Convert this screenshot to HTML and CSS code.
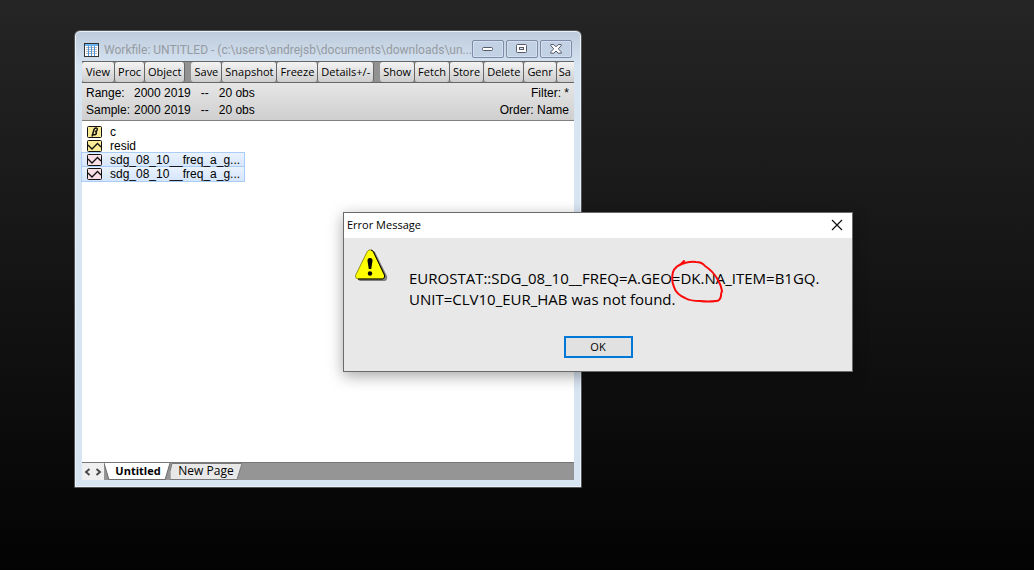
FILE: index.html
```html
<!DOCTYPE html>
<html lang="en">
<head>
<meta charset="utf-8">
<title>Workfile: UNTITLED</title>
<link rel="stylesheet" href="styles.css">
</head>
<body>
<main class="desktop">
  <section class="workfile">
    <header class="titlebar">
      <svg class="app-icon" width="15" height="14" viewBox="0 0 15 14" shape-rendering="crispEdges">
        <rect x=".5" y=".5" width="14" height="13" fill="#fff" stroke="#333"/>
        <path d="M1 1h13v2H1z" fill="#6bb3ee"/>
        <path d="M2 4.500h11M2 6.500h11M2 8.500h11M2 10.500h11" stroke="#b9b9b9"/>
        <path d="M4.500 3v10M7.500 3v10M10.500 3v10" stroke="#4b95e0"/>
      </svg>
      <h1 class="title">Workfile: UNTITLED - (c:\users\andrejsb\documents\downloads\un...</h1>
      <div class="controls">
        <button class="control" aria-label="Minimize"><svg width="12" height="6" viewBox="0 0 12 6"><rect x=".5" y="1.500" width="10" height="3" rx="1" fill="#fff" stroke="#555968"/></svg></button>
        <button class="control" aria-label="Maximize"><svg width="12" height="10" viewBox="0 0 12 10"><rect x=".5" y=".5" width="10" height="8" rx="1" fill="#fff" stroke="#555968"/><rect x="3.500" y="3.500" width="4" height="2" fill="#dce7f3" stroke="#555968"/></svg></button>
        <button class="control" aria-label="Close"><svg width="12" height="10" viewBox="0 0 12 10"><path d="M.7.6h3.200L6 2.800 8.100.6h3.200v1L8.200 4.800l3.100 3.100v1.300H8.100L6 7 3.900 9.200H.7V7.900l3.100-3.100L.7 1.600z" fill="#fff" stroke="#555968"/></svg></button>
      </div>
    </header>
    <div class="client">
      <nav class="toolbar">
        <button class="tool">View</button><button class="tool">Proc</button><button class="tool">Object</button><span class="divider"></span><button class="tool">Save</button><button class="tool">Snapshot</button><button class="tool">Freeze</button><button class="tool">Details+/-</button><span class="divider"></span><button class="tool">Show</button><button class="tool">Fetch</button><button class="tool">Store</button><button class="tool">Delete</button><button class="tool">Genr</button><button class="tool last">Sa</button>
      </nav>
      <div class="info">
        <span>Range:</span><span>2000 2019 &nbsp; -- &nbsp; 20 obs</span><span class="end">Filter: *</span>
        <span>Sample:</span><span>2000 2019 &nbsp; -- &nbsp; 20 obs</span><span class="end">Order: Name</span>
      </div>
      <ul class="objects">
        <li class="object"><svg class="object-icon" viewBox="0 0 15 12"><rect x=".5" y=".5" width="14" height="11" rx="1" fill="#faeb96" stroke="#111"/><path d="M5 10.500 7 3.500Q7.600 2 9 2t1.300 1.500Q10.200 5.300 8 5.600 9.800 5.800 9.300 7.600 8.600 9.200 6.200 8.700" fill="none" stroke="#111" stroke-width="1.500"/></svg><span>c</span></li>
        <li class="object"><svg class="object-icon" viewBox="0 0 15 12"><rect x=".5" y=".5" width="14" height="11" rx="1" fill="#faeb96" stroke="#111"/><path d="M1 5l4 4L10.500 3.500 14 7" fill="none" stroke="#111" stroke-width="1.300"/></svg><span>resid</span></li>
        <li class="object selected"><svg class="object-icon" viewBox="0 0 15 12"><rect x=".5" y=".5" width="14" height="11" rx="1" fill="#fbdfe6" stroke="#111"/><path d="M1 5l4 4L10.500 3.500 14 7" fill="none" stroke="#111" stroke-width="1.300"/></svg><span>sdg_08_10__freq_a_g...</span></li>
        <li class="object selected"><svg class="object-icon" viewBox="0 0 15 12"><rect x=".5" y=".5" width="14" height="11" rx="1" fill="#fbdfe6" stroke="#111"/><path d="M1 5l4 4L10.500 3.500 14 7" fill="none" stroke="#111" stroke-width="1.300"/></svg><span>sdg_08_10__freq_a_g...</span></li>
      </ul>
      <footer class="pages">
        <div class="arrows">
          <button class="arrow" aria-label="Previous page"><svg width="7" height="8" viewBox="0 0 7 8"><path d="M5.500 1 2 4l3.500 3" fill="none" stroke="#444" stroke-width="1.800"/></svg></button>
          <button class="arrow" aria-label="Next page"><svg width="7" height="8" viewBox="0 0 7 8"><path d="M1.500 1 5 4 1.500 7" fill="none" stroke="#444" stroke-width="1.800"/></svg></button>
        </div>
        <button class="page current"><svg class="page-shape" viewBox="0 0 68 18" preserveAspectRatio="none"><path d="M0 0h68l-5 17.500H5z" fill="#fff"/><path d="M0 0l5 17.500h58L68 0" fill="none" stroke="#666"/></svg><span>Untitled</span></button>
        <button class="page"><svg class="page-shape" viewBox="0 0 72 18" preserveAspectRatio="none"><path d="M2 .5h70l-5 17H0V9z" fill="#e8e8e8" stroke="#777"/></svg><span>New Page</span></button>
      </footer>
    </div>
  </section>

  <section class="dialog" role="dialog" aria-labelledby="dialog-title">
    <header class="dialog-bar">
      <h2 class="dialog-title" id="dialog-title">Error Message</h2>
      <button class="dialog-close" aria-label="Close"><svg width="12" height="12" viewBox="0 0 12 12"><path d="M1 1l10 10M11 1 1 11" stroke="#111" stroke-width="1.200"/></svg></button>
    </header>
    <div class="dialog-body">
      <svg class="warning" width="33" height="33" viewBox="0 0 33 33">
        <path d="M16 3q2-2 4 0l12 24q1 4-2 5H5q-3-1-2-4z" fill="#808080"/>
        <path d="M14.500 1q2.500-.8 4 2l11 23q1 3-2 4H3q-3-.5-2.500-3.500L12 3q1-1.800 2.500-2z" fill="#ff0" stroke="#77770a" stroke-width=".8"/>
        <path d="M16 1q2 .5 2.500 2l11 23q1 3-2 4H3" fill="none" stroke="#000"/>
        <path d="M15 9q2.700 0 2.500 3l-1.300 8h-2.400l-1.300-8q-.2-3 2.500-3z"/><circle cx="15" cy="24.500" r="2.200"/>
      </svg>
      <p class="message">EUROSTAT::SDG_08_10__FREQ=A.GEO=<span class="marked">DK.NA<svg class="mark" width="54" height="48" viewBox="0 0 54 48"><path d="M10 6 14 2M8 7q9-5 18-4 6 0 9 4 8 5 13 14 3 5 4 11-1 2-1 5-1 5-5 5-8 1-16 0-10 0-15-3-9-4-11-11-3-7-1-15Q5 7 14 4" fill="none" stroke="#fc0a0a" stroke-width="2" stroke-linecap="round" stroke-linejoin="round"/></svg></span>_ITEM=B1GQ.<br>UNIT=CLV10_EUR_HAB was not found.</p>
      <button class="ok">OK</button>
    </div>
  </section>
</main>
</body>
</html>
```
FILE: styles.css
```css
* { box-sizing: border-box; }

body {
  margin: 0;
  font: 12px/16px "Open Sans", "Noto Sans", sans-serif;
  color: #000;
}

button {
  margin: 0;
  padding: 0;
  border: 0;
  background: none;
  font: inherit;
  color: inherit;
}

.desktop {
  position: relative;
  min-height: 100vh;
  overflow: hidden;
  background: linear-gradient(#252525, #030303);
}

.workfile {
  position: absolute;
  left: 74px;
  top: 30px;
  width: 508px;
  padding: 7px;
  border: 1px solid #555;
  border-radius: 6px 6px 0 0;
  background: linear-gradient(#bdcbdc, #d7e4f2 36px);
  box-shadow: inset 0 0 0 1px #e9f1f9;
}

.titlebar {
  display: flex;
  align-items: center;
  gap: 5px;
  height: 23px;
  padding: 0 2px 0;
}

.title {
  flex: 1;
  min-width: 0;
  margin: 0;
  font: 12px/16px Roboto, "Open Sans", sans-serif;
  white-space: nowrap;
  color: #969ba2;
}

.controls { display: flex; gap: 2px; padding-bottom: 1px; }

.control {
  display: flex;
  align-items: center;
  justify-content: center;
  width: 32px;
  height: 18px;
  border: 1px solid #7f8ba8;
  border-radius: 2px;
  background: #c2d1e3;
  box-shadow: inset 0 0 0 1px #d3dfed;
}

.client { background: #fff; }

.toolbar {
  display: flex;
  height: 22px;
  overflow: hidden;
  border-top: 1px solid #666;
  border-bottom: 1px solid #666;
  background: #929292;
}

.tool {
  flex: none;
  padding: 0 3px;
  border: 1px solid #666;
  border-width: 0 1px 0 0;
  border-radius: 3px;
  background: linear-gradient(#f4f4f4, #cdcdcd);
  font-size: 11px;
}

.tool:first-child { padding: 0 4px; }

.last {
  flex: 1;
  padding: 0 0 0 2px;
  border-right: 0;
  border-radius: 3px 0 0 3px;
  text-align: left;
}

.divider { flex: none; width: 6px; }

.info {
  display: grid;
  grid-template-columns: 48px 1fr auto;
  padding: 2px 5px 1px 4px;
  border-bottom: 1px solid #808080;
  background: linear-gradient(#e6e6e6, #cfcfcf);
  font: 12px/17px "Liberation Sans", Arial, sans-serif;
}

.end { text-align: right; }

.objects {
  display: flex;
  flex-direction: column;
  align-items: flex-start;
  min-height: 341px;
  margin: 0;
  padding: 4px 0;
  list-style: none;
  font: 12px/14px "Liberation Sans", Arial, sans-serif;
}

.object {
  display: flex;
  align-items: center;
  gap: 8px;
  height: 14px;
  padding: 0 4px 0 5px;
}

.object span { position: relative; z-index: 1; }

.object-icon { width: 15px; height: 12px; }

.selected {
  background: linear-gradient(#eaf2fd, #d5e5fb);
  box-shadow: 0 0 0 1px #aaccf8;
}

.pages {
  display: flex;
  height: 18px;
  border-top: 1px solid #777;
  background: #959595;
}

.arrows {
  display: flex;
  align-items: center;
  gap: 4px;
  width: 22px;
  padding-left: 2px;
  background: #efefef;
}

.arrow { display: flex; }

.page {
  position: relative;
  width: 72px;
  padding-bottom: 2px;
  font-size: 12px;
  line-height: 15px;
}

.page span { position: relative; }

.page-shape {
  position: absolute;
  inset: 0;
  width: 100%;
  height: 100%;
}

.current {
  z-index: 1;
  width: 66px;
  padding-left: 2px;
  font-size: 11px;
  font-weight: 700;
}

.dialog {
  position: absolute;
  left: 343px;
  top: 212px;
  width: 510px;
  border: 1px solid #6a6a6a;
  background: #e8e8e8;
  box-shadow: 0 4px 14px rgba(0, 0, 0, .35);
}

.dialog-bar {
  display: flex;
  align-items: center;
  justify-content: space-between;
  height: 25px;
  padding: 0 9px 2px 3px;
  background: #fff;
}

.dialog-title { margin: 0; font-size: 11px; font-weight: 400; }

.dialog-close { display: flex; }

.dialog-body {
  display: grid;
  grid-template-columns: 33px 1fr;
  column-gap: 21px;
  padding: 11px 11px 13px;
}

.message {
  margin: 0;
  padding-top: 19px;
  font-size: 15px;
  line-height: 21px;
  white-space: nowrap;
}

.marked { position: relative; }

.mark {
  position: absolute;
  left: -10px;
  top: -9px;
}

.ok {
  grid-column: 1 / -1;
  justify-self: center;
  width: 69px;
  height: 22px;
  margin-top: 26px;
  border: 2px solid #0078d7;
  background: #e1e1e1;
  font-size: 11px;
}
```
